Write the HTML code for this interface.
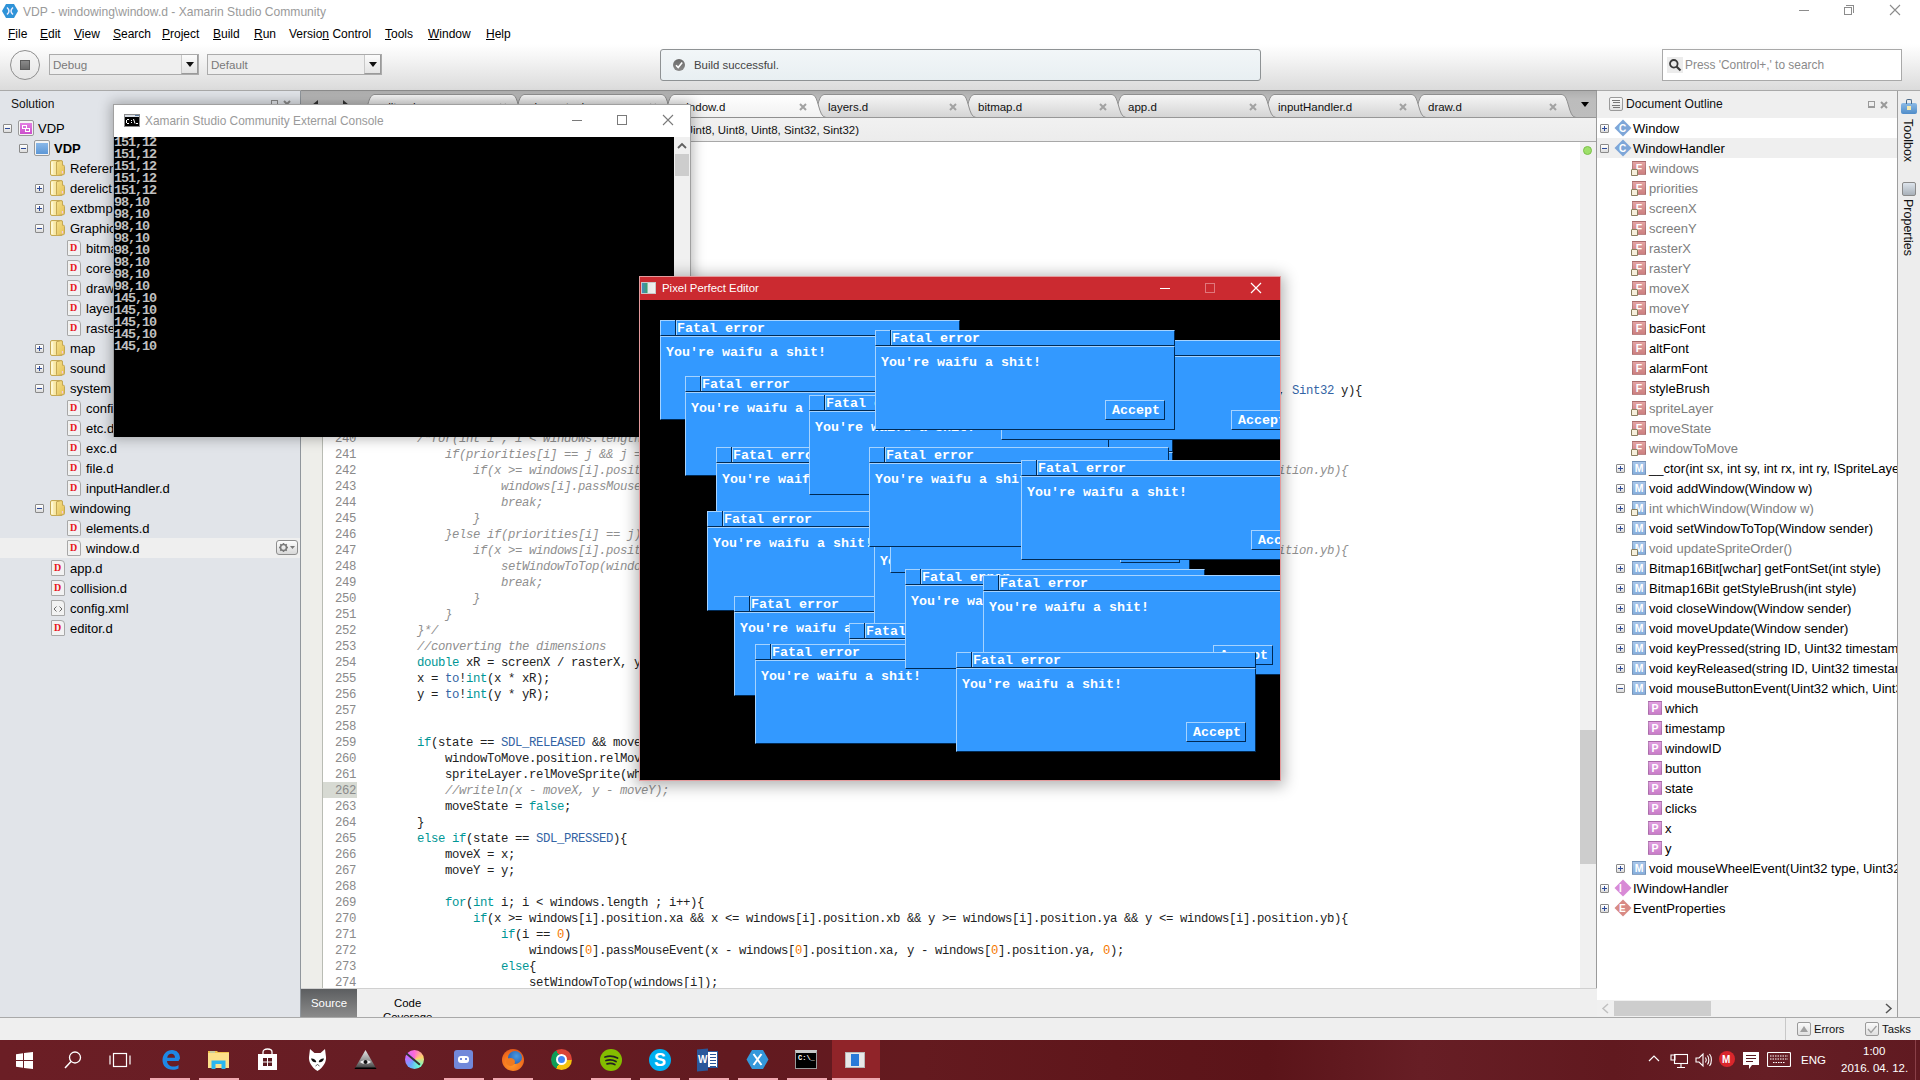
<!DOCTYPE html><html><head><meta charset="utf-8"><title>VDP - Xamarin Studio</title><style>
*{box-sizing:border-box;margin:0;padding:0}
html,body{width:1920px;height:1080px;overflow:hidden;background:#fff}
body{position:relative;font-family:'Liberation Sans',sans-serif;font-size:12px;color:#000}
.a{position:absolute}
.t{position:absolute;white-space:nowrap;line-height:1}
.mono{font-family:'Liberation Mono',monospace}
.row{position:absolute;height:20px;white-space:nowrap}
.exp{position:absolute;width:9px;height:9px;border:1px solid #8a8a8a;border-radius:1px;background:linear-gradient(#fff,#dcdcdc)}
.exp:before{content:'';position:absolute;left:1px;top:3px;width:5px;height:1px;background:#2c4a9a}
.exp.p:after{content:'';position:absolute;left:3px;top:1px;width:1px;height:5px;background:#2c4a9a}
.lbl{position:absolute;font-size:12.5px;line-height:20px;top:0;white-space:nowrap}
.dfile{position:absolute;width:14px;height:16px;background:#f2f2f2;border:1px solid #a8a8a8;border-radius:1px 4px 1px 1px}
.dfile:after{content:'D';position:absolute;left:2px;top:1px;font:bold 10px 'Liberation Serif',serif;color:#e8141b}
.folder{position:absolute;width:16px;height:16px}
.folder:before{content:'';position:absolute;left:1px;top:2px;width:12px;height:13px;background:linear-gradient(90deg,#e6c25a,#fbe79a 45%,#e0b94a);border-radius:1px}
.folder:after{content:'';position:absolute;left:9px;top:5px;width:6px;height:11px;background:linear-gradient(90deg,#f7de86,#e9c561);border-radius:1px;transform:skewY(-10deg)}
.oic{position:absolute;width:14px;height:14px;color:#fff;font:bold 10.5px 'Liberation Sans',sans-serif;text-align:center;line-height:13px;border:1px solid rgba(0,0,0,0.16)}
.lock{position:absolute;width:7px;height:7px;background:#f6f0dc;border:1px solid #8c8060;border-radius:1px 1px 0 0}
.diam{position:absolute;width:12px;height:12px;transform:rotate(45deg)}
.code{position:absolute;left:361px;white-space:pre;font-family:'Liberation Mono',monospace;font-size:12.3px;letter-spacing:-0.38px;line-height:16px;height:16px;padding-top:1px;color:#222}
.k{color:#009695}.ty{color:#3364a4}.n{color:#f57900}.cm{color:#8f8f8f;font-style:italic}
.ln{position:absolute;left:323px;width:33px;text-align:right;font-family:'Liberation Mono',monospace;font-size:12.3px;letter-spacing:-0.38px;line-height:16px;height:16px;padding-top:1px;color:#8a8a8a}
.fw{position:absolute;width:300px;height:100px}
.fw .tb{position:absolute;left:0;top:0;width:300px;height:16px;background:#3399ff;border-top:1px solid #a6d3ff;border-left:1px solid #a6d3ff;border-bottom:1px solid #002a55;border-right:1px solid #002a55}
.fw .cb{position:absolute;left:-1px;top:-1px;width:16px;height:16px;border-right:1px solid #002a55}
.fw .tl{position:absolute;left:15px;top:0;width:1px;height:14px;background:#a6d3ff}
.fw .bd{position:absolute;left:0;top:16px;width:300px;height:84px;background:#3399ff;border-top:1px solid #a6d3ff;border-left:1px solid #a6d3ff;border-bottom:1px solid #002a55;border-right:1px solid #002a55}
.fw .bt{position:absolute;left:230px;top:70px;width:60px;height:20px;border-top:1px solid #a6d3ff;border-left:1px solid #a6d3ff;border-bottom:1px solid #002a55;border-right:1px solid #002a55}
.px{position:absolute;white-space:pre;font-family:'Liberation Mono',monospace;font-weight:bold;font-size:13.333px;line-height:12px;color:#fff;letter-spacing:0}
.con{position:absolute;left:114px;white-space:pre;font-family:'Liberation Mono',monospace;font-weight:bold;font-size:13.5px;letter-spacing:-1.1px;line-height:12px;height:12px;color:#c0c0c0}
.tab{position:absolute}
.ul{text-decoration:underline;text-underline-offset:1px}
</style></head><body>
<svg width="0" height="0" style="position:absolute"><defs><linearGradient id="fy" x1="0" y1="0" x2="1" y2="0"><stop offset="0" stop-color="#fff6c4"/><stop offset="1" stop-color="#ecd074"/></linearGradient><linearGradient id="fz" x1="0" y1="0" x2="1" y2="1"><stop offset="0" stop-color="#f6e08c"/><stop offset="1" stop-color="#e2c055"/></linearGradient><symbol id="fold" viewBox="0 0 16 16"><rect x="0.5" y="0.5" width="12" height="15" rx="1.5" fill="url(#fy)" stroke="#c4a855"/><path d="M2 2.2V14" stroke="#fffdf0" stroke-width="1"/><path d="M6.5 1.8L11 0.6Q12.5 0.5 12.5 2V5.2H13.2Q14.5 5.2 14.5 6.5V13.5Q14.5 14.6 13.3 14.7L7.6 15.5Q6.5 15.6 6.5 14.5Z" fill="url(#fz)" stroke="#c4a855"/><path d="M12.5 11V13.5" stroke="#f4c8e8" stroke-width="1.2"/></symbol></defs></svg>
<div class="a" style="left:0;top:0;width:1920px;height:22px;background:#fff"></div>
<svg class="a" style="left:2px;top:4px" width="16" height="14" viewBox="0 0 16 14"><polygon points="4,0 12,0 16,7 12,14 4,14 0,7" fill="#2f93d8"/><path d="M5 3.5Q9 7 5 10.5M11 3.5Q7 7 11 10.5" stroke="#eef" stroke-width="1.5" fill="none"/></svg>
<div class="t" style="left:23px;top:6.00px;font-size:12.1px;color:#9a9a9a;">VDP - windowing\window.d - Xamarin Studio Community</div>
<div class="a" style="left:1799px;top:10px;width:10px;height:1px;background:#8c8c8c"></div>
<div class="a" style="left:1844px;top:7px;width:8px;height:8px;border:1px solid #8c8c8c;background:#fff"></div>
<div class="a" style="left:1846px;top:5px;width:8px;height:8px;border-top:1px solid #8c8c8c;border-right:1px solid #8c8c8c"></div>
<svg class="a" style="left:1889px;top:4px" width="12" height="12"><path d="M1 1L11 11M11 1L1 11" stroke="#8c8c8c" stroke-width="1.1"/></svg>
<div class="a" style="left:0;top:22px;width:1920px;height:22px;background:#fff"></div>
<div class="t" style="left:8px;top:28.00px;font-size:12px;color:#000;"><span class="ul">F</span>ile</div>
<div class="t" style="left:40px;top:28.00px;font-size:12px;color:#000;"><span class="ul">E</span>dit</div>
<div class="t" style="left:74px;top:28.00px;font-size:12px;color:#000;"><span class="ul">V</span>iew</div>
<div class="t" style="left:113px;top:28.00px;font-size:12px;color:#000;"><span class="ul">S</span>earch</div>
<div class="t" style="left:162px;top:28.00px;font-size:12px;color:#000;"><span class="ul">P</span>roject</div>
<div class="t" style="left:213px;top:28.00px;font-size:12px;color:#000;"><span class="ul">B</span>uild</div>
<div class="t" style="left:254px;top:28.00px;font-size:12px;color:#000;"><span class="ul">R</span>un</div>
<div class="t" style="left:289px;top:28.00px;font-size:12px;color:#000;">Versio<span class="ul">n</span> Control</div>
<div class="t" style="left:385px;top:28.00px;font-size:12px;color:#000;"><span class="ul">T</span>ools</div>
<div class="t" style="left:428px;top:28.00px;font-size:12px;color:#000;"><span class="ul">W</span>indow</div>
<div class="t" style="left:486px;top:28.00px;font-size:12px;color:#000;"><span class="ul">H</span>elp</div>
<div class="a" style="left:0;top:44px;width:1920px;height:46px;background:linear-gradient(#ffffff,#f5f5f5 30%,#dbdbdb)"></div>
<div class="a" style="left:0;top:90px;width:1920px;height:1px;background:#a9a9a9"></div>
<div class="a" style="left:10px;top:50px;width:30px;height:30px;border-radius:50%;border:1px solid #8e8e8e;background:linear-gradient(#f6f6f6,#e6e6e6)"></div>
<div class="a" style="left:20px;top:60px;width:10px;height:10px;background:linear-gradient(#8a8a8a,#6a6a6a);border:1px solid #5a5a5a"></div>
<div class="a" style="left:49px;top:54px;width:150px;height:21px;border:1px solid #ababab;background:#efefef"></div>
<div class="a" style="left:181px;top:55px;width:17px;height:19px;background:linear-gradient(#fbfbfb,#e4e4e4);border-left:1px solid #c8c8c8;border-right:1px solid #9a9a9a;border-bottom:1px solid #9a9a9a"></div>
<div class="a" style="left:186px;top:62px;width:0;height:0;border-left:4px solid transparent;border-right:4px solid transparent;border-top:5px solid #111"></div>
<div class="t" style="left:53px;top:59.00px;font-size:11.6px;color:#7a7a7a;">Debug</div>
<div class="a" style="left:207px;top:54px;width:175px;height:21px;border:1px solid #ababab;background:#efefef"></div>
<div class="a" style="left:364px;top:55px;width:17px;height:19px;background:linear-gradient(#fbfbfb,#e4e4e4);border-left:1px solid #c8c8c8;border-right:1px solid #9a9a9a;border-bottom:1px solid #9a9a9a"></div>
<div class="a" style="left:369px;top:62px;width:0;height:0;border-left:4px solid transparent;border-right:4px solid transparent;border-top:5px solid #111"></div>
<div class="t" style="left:211px;top:59.00px;font-size:11.6px;color:#7a7a7a;">Default</div>
<div class="a" style="left:660px;top:49px;width:601px;height:32px;border:1px solid #8e9294;border-radius:3px;background:linear-gradient(#f2f6f8,#e8eff2)"></div>
<div class="a" style="left:673px;top:59px;width:12px;height:12px;border-radius:50%;background:linear-gradient(#6a6a6a,#8a8a8a)"></div>
<svg class="a" style="left:673px;top:59px" width="12" height="12"><path d="M3 6.3L5.2 8.5L9.2 3.6" stroke="#fff" stroke-width="1.6" fill="none"/></svg>
<div class="t" style="left:694px;top:60.00px;font-size:11.4px;color:#444;">Build successful.</div>
<div class="a" style="left:1662px;top:49px;width:240px;height:32px;border:1px solid #a9a9a9;background:#fff"></div>
<div class="a" style="left:1667px;top:57px;width:16px;height:16px;background:#ececec"></div>
<svg class="a" style="left:1668px;top:58px" width="14" height="14"><circle cx="5.8" cy="5.8" r="3.8" stroke="#3a3a3a" stroke-width="1.8" fill="none"/><path d="M8.5 8.5L12.5 12.5" stroke="#3a3a3a" stroke-width="2.2"/></svg>
<div class="t" style="left:1685px;top:60.00px;font-size:11.9px;color:#8a8a8a;">Press 'Control+,' to search</div>
<div class="a" style="left:0;top:91px;width:300px;height:926px;background:#e1e4e9"></div>
<div class="a" style="left:300px;top:91px;width:1px;height:926px;background:#90969c"></div>
<div class="t" style="left:11px;top:98.00px;font-size:12px;color:#111;">Solution</div>
<div class="a" style="left:271px;top:100px;width:7px;height:7px;border:1px solid #8a8a8a;border-bottom-width:2px"></div>
<svg class="a" style="left:283px;top:100px" width="8" height="8"><path d="M1 1L7 7M7 1L1 7" stroke="#8a8a8a" stroke-width="2"/></svg>
<div class="exp" style="left:3px;top:124px"></div>
<div class="a" style="left:18px;top:120px;width:16px;height:16px;border:1px solid #9a9a9a;border-radius:2px;background:#f4f4f4"></div>
<div class="a" style="left:20px;top:123px;width:12px;height:11px;background:linear-gradient(#e27ee2,#cc4fcc)"></div>
<div class="a" style="left:22px;top:125px;width:5px;height:4px;border:1px solid #fff"></div>
<div class="a" style="left:25px;top:128px;width:5px;height:4px;border:1px solid #fff"></div>
<div class="t" style="left:38px;top:122.00px;font-size:13px;color:#000;">VDP</div>
<div class="exp" style="left:19px;top:144px"></div>
<div class="a" style="left:34px;top:140px;width:16px;height:16px;border:1px solid #9a9a9a;border-radius:2px;background:#f4f4f4"></div>
<div class="a" style="left:36px;top:143px;width:12px;height:11px;background:linear-gradient(#8ab8e8,#5d97d6)"></div>
<div class="t" style="left:54px;top:142.00px;font-size:13px;color:#000;font-weight:bold;">VDP</div>
<svg class="a" style="left:50px;top:160px" width="16" height="16"><use href="#fold"/></svg>
<div class="t" style="left:70px;top:162.00px;font-size:13px;color:#000;">References</div>
<div class="exp p" style="left:35px;top:184px"></div>
<svg class="a" style="left:50px;top:180px" width="16" height="16"><use href="#fold"/></svg>
<div class="t" style="left:70px;top:182.00px;font-size:13px;color:#000;">derelict</div>
<div class="exp p" style="left:35px;top:204px"></div>
<svg class="a" style="left:50px;top:200px" width="16" height="16"><use href="#fold"/></svg>
<div class="t" style="left:70px;top:202.00px;font-size:13px;color:#000;">extbmp</div>
<div class="exp" style="left:35px;top:224px"></div>
<svg class="a" style="left:50px;top:220px" width="16" height="16"><use href="#fold"/></svg>
<div class="t" style="left:70px;top:222.00px;font-size:13px;color:#000;">Graphics</div>
<div class="dfile" style="left:67px;top:240px"></div>
<div class="t" style="left:86px;top:242.00px;font-size:13px;color:#000;">bitmap.d</div>
<div class="dfile" style="left:67px;top:260px"></div>
<div class="t" style="left:86px;top:262.00px;font-size:13px;color:#000;">core.d</div>
<div class="dfile" style="left:67px;top:280px"></div>
<div class="t" style="left:86px;top:282.00px;font-size:13px;color:#000;">draw.d</div>
<div class="dfile" style="left:67px;top:300px"></div>
<div class="t" style="left:86px;top:302.00px;font-size:13px;color:#000;">layers.d</div>
<div class="dfile" style="left:67px;top:320px"></div>
<div class="t" style="left:86px;top:322.00px;font-size:13px;color:#000;">raster.d</div>
<div class="exp p" style="left:35px;top:344px"></div>
<svg class="a" style="left:50px;top:340px" width="16" height="16"><use href="#fold"/></svg>
<div class="t" style="left:70px;top:342.00px;font-size:13px;color:#000;">map</div>
<div class="exp p" style="left:35px;top:364px"></div>
<svg class="a" style="left:50px;top:360px" width="16" height="16"><use href="#fold"/></svg>
<div class="t" style="left:70px;top:362.00px;font-size:13px;color:#000;">sound</div>
<div class="exp" style="left:35px;top:384px"></div>
<svg class="a" style="left:50px;top:380px" width="16" height="16"><use href="#fold"/></svg>
<div class="t" style="left:70px;top:382.00px;font-size:13px;color:#000;">system</div>
<div class="dfile" style="left:67px;top:400px"></div>
<div class="t" style="left:86px;top:402.00px;font-size:13px;color:#000;">config.d</div>
<div class="dfile" style="left:67px;top:420px"></div>
<div class="t" style="left:86px;top:422.00px;font-size:13px;color:#000;">etc.d</div>
<div class="dfile" style="left:67px;top:440px"></div>
<div class="t" style="left:86px;top:442.00px;font-size:13px;color:#000;">exc.d</div>
<div class="dfile" style="left:67px;top:460px"></div>
<div class="t" style="left:86px;top:462.00px;font-size:13px;color:#000;">file.d</div>
<div class="dfile" style="left:67px;top:480px"></div>
<div class="t" style="left:86px;top:482.00px;font-size:13px;color:#000;">inputHandler.d</div>
<div class="exp" style="left:35px;top:504px"></div>
<svg class="a" style="left:50px;top:500px" width="16" height="16"><use href="#fold"/></svg>
<div class="t" style="left:70px;top:502.00px;font-size:13px;color:#000;">windowing</div>
<div class="dfile" style="left:67px;top:520px"></div>
<div class="t" style="left:86px;top:522.00px;font-size:13px;color:#000;">elements.d</div>
<div class="a" style="left:0;top:538px;width:300px;height:20px;background:#efefef"></div>
<div class="a" style="left:276px;top:540px;width:22px;height:15px;border:1px solid #8e8e8e;border-radius:3px;background:linear-gradient(#fdfdfd,#d8d8d8)"></div>
<svg class="a" style="left:278px;top:542px" width="18" height="11"><circle cx="5.5" cy="5.5" r="3" stroke="#7a7a7a" stroke-width="1.6" fill="none"/><path d="M5.5 1V2.5M5.5 8.5V10M1 5.5H2.5M8.5 5.5H10M2.3 2.3L3.3 3.3M7.7 7.7L8.7 8.7M2.3 8.7L3.3 7.7M7.7 3.3L8.7 2.3" stroke="#7a7a7a" stroke-width="1.4"/><path d="M12 4H17L14.5 7Z" fill="#7a7a7a"/></svg>
<div class="dfile" style="left:67px;top:540px"></div>
<div class="t" style="left:86px;top:542.00px;font-size:13px;color:#000;">window.d</div>
<div class="dfile" style="left:51px;top:560px"></div>
<div class="t" style="left:70px;top:562.00px;font-size:13px;color:#000;">app.d</div>
<div class="dfile" style="left:51px;top:580px"></div>
<div class="t" style="left:70px;top:582.00px;font-size:13px;color:#000;">collision.d</div>
<div class="dfile" style="left:51px;top:600px;color:transparent"></div>
<div class="a" style="left:51px;top:600px;width:14px;height:16px;background:#f2f2f2;border:1px solid #a8a8a8;border-radius:1px 4px 1px 1px"></div>
<svg class="a" style="left:51px;top:600px" width="14" height="16"><path d="M5.5 6.5L3 9L5.5 11.5M8.5 6.5L11 9L8.5 11.5" stroke="#6a6a6a" stroke-width="1" fill="none"/></svg>
<div class="t" style="left:70px;top:602.00px;font-size:13px;color:#000;">config.xml</div>
<div class="dfile" style="left:51px;top:620px"></div>
<div class="t" style="left:70px;top:622.00px;font-size:13px;color:#000;">editor.d</div>
<div class="a" style="left:301px;top:90px;width:1296px;height:1px;background:#8c8c8c"></div>
<div class="a" style="left:301px;top:91px;width:1296px;height:27px;background:linear-gradient(#aeaeae,#bcbcbc 30%,#bdbdbd)"></div>
<div class="a" style="left:301px;top:117px;width:1296px;height:1px;background:#979797"></div>
<div class="a" style="left:312px;top:100px;width:0;height:0;border-top:5px solid transparent;border-bottom:5px solid transparent;border-right:6px solid #333"></div>
<div class="a" style="left:343px;top:100px;width:0;height:0;border-top:5px solid transparent;border-bottom:5px solid transparent;border-left:6px solid #333"></div>
<svg class="a" style="left:0;top:0" width="1597" height="120"><defs><linearGradient id="tgi" x1="0" y1="0" x2="0" y2="1"><stop offset="0" stop-color="#f6f6f6"/><stop offset="1" stop-color="#d4d4d4"/></linearGradient><linearGradient id="tga" x1="0" y1="0" x2="0" y2="1"><stop offset="0" stop-color="#ffffff"/><stop offset="1" stop-color="#f1f1f1"/></linearGradient></defs><path d="M1410 117.5 C1418 117.5 1417 94.5 1424 94.5 L1562 94.5 C1569 94.5 1568 117.5 1576 117.5 Z" fill="url(#tgi)" stroke="#8f8f8f" stroke-width="1"/><path d="M1260 117.5 C1268 117.5 1267 94.5 1274 94.5 L1412 94.5 C1419 94.5 1418 117.5 1426 117.5 Z" fill="url(#tgi)" stroke="#8f8f8f" stroke-width="1"/><path d="M1110 117.5 C1118 117.5 1117 94.5 1124 94.5 L1262 94.5 C1269 94.5 1268 117.5 1276 117.5 Z" fill="url(#tgi)" stroke="#8f8f8f" stroke-width="1"/><path d="M960 117.5 C968 117.5 967 94.5 974 94.5 L1112 94.5 C1119 94.5 1118 117.5 1126 117.5 Z" fill="url(#tgi)" stroke="#8f8f8f" stroke-width="1"/><path d="M810 117.5 C818 117.5 817 94.5 824 94.5 L962 94.5 C969 94.5 968 117.5 976 117.5 Z" fill="url(#tgi)" stroke="#8f8f8f" stroke-width="1"/><path d="M510 117.5 C518 117.5 517 94.5 524 94.5 L662 94.5 C669 94.5 668 117.5 676 117.5 Z" fill="url(#tgi)" stroke="#8f8f8f" stroke-width="1"/><path d="M360 117.5 C368 117.5 367 94.5 374 94.5 L512 94.5 C519 94.5 518 117.5 526 117.5 Z" fill="url(#tgi)" stroke="#8f8f8f" stroke-width="1"/><path d="M660 117.5 C668 117.5 667 94.5 674 94.5 L812 94.5 C819 94.5 818 117.5 826 117.5 Z" fill="url(#tga)" stroke="#8f8f8f" stroke-width="1"/></svg>
<div class="a" style="left:301px;top:117px;width:373px;height:1px;background:#979797"></div>
<div class="a" style="left:820px;top:117px;width:777px;height:1px;background:#979797"></div>
<div class="t" style="left:378px;top:102.00px;font-size:11.5px;color:#111;">editor.d</div>
<svg class="a" style="left:499px;top:103px" width="8" height="8"><path d="M1 1L7 7M7 1L1 7" stroke="#a2a2a2" stroke-width="2"/></svg>
<div class="t" style="left:528px;top:102.00px;font-size:11.5px;color:#111;">elements.d</div>
<svg class="a" style="left:649px;top:103px" width="8" height="8"><path d="M1 1L7 7M7 1L1 7" stroke="#a2a2a2" stroke-width="2"/></svg>
<div class="t" style="left:678px;top:102.00px;font-size:11.5px;color:#111;">window.d</div>
<svg class="a" style="left:799px;top:103px" width="8" height="8"><path d="M1 1L7 7M7 1L1 7" stroke="#a2a2a2" stroke-width="2"/></svg>
<div class="t" style="left:828px;top:102.00px;font-size:11.5px;color:#111;">layers.d</div>
<svg class="a" style="left:949px;top:103px" width="8" height="8"><path d="M1 1L7 7M7 1L1 7" stroke="#a2a2a2" stroke-width="2"/></svg>
<div class="t" style="left:978px;top:102.00px;font-size:11.5px;color:#111;">bitmap.d</div>
<svg class="a" style="left:1099px;top:103px" width="8" height="8"><path d="M1 1L7 7M7 1L1 7" stroke="#a2a2a2" stroke-width="2"/></svg>
<div class="t" style="left:1128px;top:102.00px;font-size:11.5px;color:#111;">app.d</div>
<svg class="a" style="left:1249px;top:103px" width="8" height="8"><path d="M1 1L7 7M7 1L1 7" stroke="#a2a2a2" stroke-width="2"/></svg>
<div class="t" style="left:1278px;top:102.00px;font-size:11.5px;color:#111;">inputHandler.d</div>
<svg class="a" style="left:1399px;top:103px" width="8" height="8"><path d="M1 1L7 7M7 1L1 7" stroke="#a2a2a2" stroke-width="2"/></svg>
<div class="t" style="left:1428px;top:102.00px;font-size:11.5px;color:#111;">draw.d</div>
<svg class="a" style="left:1549px;top:103px" width="8" height="8"><path d="M1 1L7 7M7 1L1 7" stroke="#a2a2a2" stroke-width="2"/></svg>
<div class="a" style="left:1581px;top:102px;width:0;height:0;border-left:4px solid transparent;border-right:4px solid transparent;border-top:5px solid #000"></div>
<div class="a" style="left:301px;top:118px;width:1296px;height:23px;background:linear-gradient(#f1f1f1,#ececec)"></div>
<div class="a" style="left:301px;top:141px;width:1296px;height:1px;background:#a8a8a8"></div>
<div class="t" style="right:1061px;top:125.00px;font-size:11.45px;color:#111;">WindowHandler &gt; void mouseButtonEvent(Uint32, Uint32, Uint32, Uint8, Uint8, Uint8, Sint32, Sint32)</div>
<div class="a" style="left:301px;top:142px;width:1279px;height:846px;background:#fff"></div>
<div class="a" style="left:301px;top:142px;width:21px;height:846px;background:#eeeeea"></div>
<div class="a" style="left:322px;top:142px;width:1px;height:846px;background:#b9bcb4"></div>
<div class="a" style="left:1580px;top:142px;width:16px;height:846px;background:#f0f0f0"></div>
<div class="a" style="left:1580px;top:730px;width:16px;height:134px;background:#cdcdcd"></div>
<div class="a" style="left:1583px;top:146px;width:9px;height:9px;border-radius:50%;background:#9ee06a;border:1px solid #7cc04a"></div>
<div class="a" style="left:1596px;top:91px;width:1px;height:926px;background:#9a9a9a"></div>
<div class="a" style="left:0;top:142px;width:1580px;height:846px;overflow:hidden">
<div class="ln" style="top:0px">222</div>
<div class="ln" style="top:16px">223</div>
<div class="ln" style="top:32px">224</div>
<div class="ln" style="top:48px">225</div>
<div class="ln" style="top:64px">226</div>
<div class="ln" style="top:80px">227</div>
<div class="ln" style="top:96px">228</div>
<div class="ln" style="top:112px">229</div>
<div class="ln" style="top:128px">230</div>
<div class="ln" style="top:144px">231</div>
<div class="ln" style="top:160px">232</div>
<div class="ln" style="top:176px">233</div>
<div class="ln" style="top:192px">234</div>
<div class="ln" style="top:208px">235</div>
<div class="ln" style="top:224px">236</div>
<div class="ln" style="top:240px">237</div>
<div class="code" style="top:240px">    public <span class="k">void</span> mouseButtonEvent(<span class="ty">Uint32</span> which, <span class="ty">Uint32</span> timestamp, <span class="ty">Uint32</span> windowID, <span class="ty">Uint8</span> button, <span class="ty">Uint8</span> state, <span class="ty">Uint8</span> clicks, <span class="ty">Sint32</span> x, <span class="ty">Sint32</span> y){</div>
<div class="ln" style="top:256px">238</div>
<div class="ln" style="top:272px">239</div>
<div class="ln" style="top:288px">240</div>
<div class="code" style="top:288px">        <span class="cm">/*for(int i ; i &lt; windows.length ; i++){</span></div>
<div class="ln" style="top:304px">241</div>
<div class="code" style="top:304px">            <span class="cm">if(priorities[i] == j &amp;&amp; j == 0){</span></div>
<div class="ln" style="top:320px">242</div>
<div class="code" style="top:320px">                <span class="cm">if(x &gt;= windows[i].position.xa &amp;&amp; x &lt;= windows[i].position.xb &amp;&amp; y &gt;= windows[i].position.ya &amp;&amp; y &lt;= windows[i].position.yb){</span></div>
<div class="ln" style="top:336px">243</div>
<div class="code" style="top:336px">                    <span class="cm">windows[i].passMouseEvent(x - windows[i].position.xa, y - windows[i].position.ya, 0);</span></div>
<div class="ln" style="top:352px">244</div>
<div class="code" style="top:352px">                    <span class="cm">break;</span></div>
<div class="ln" style="top:368px">245</div>
<div class="code" style="top:368px">                <span class="cm">}</span></div>
<div class="ln" style="top:384px">246</div>
<div class="code" style="top:384px">            <span class="cm">}else if(priorities[i] == j){</span></div>
<div class="ln" style="top:400px">247</div>
<div class="code" style="top:400px">                <span class="cm">if(x &gt;= windows[i].position.xa &amp;&amp; x &lt;= windows[i].position.xb &amp;&amp; y &gt;= windows[i].position.ya &amp;&amp; y &lt;= windows[i].position.yb){</span></div>
<div class="ln" style="top:416px">248</div>
<div class="code" style="top:416px">                    <span class="cm">setWindowToTop(windows[i]);</span></div>
<div class="ln" style="top:432px">249</div>
<div class="code" style="top:432px">                    <span class="cm">break;</span></div>
<div class="ln" style="top:448px">250</div>
<div class="code" style="top:448px">                <span class="cm">}</span></div>
<div class="ln" style="top:464px">251</div>
<div class="code" style="top:464px">            <span class="cm">}</span></div>
<div class="ln" style="top:480px">252</div>
<div class="code" style="top:480px">        <span class="cm">}*/</span></div>
<div class="ln" style="top:496px">253</div>
<div class="code" style="top:496px">        <span class="cm">//converting the dimensions</span></div>
<div class="ln" style="top:512px">254</div>
<div class="code" style="top:512px">        <span class="k">double</span> xR = screenX / rasterX, yR = screenY / rasterY;</div>
<div class="ln" style="top:528px">255</div>
<div class="code" style="top:528px">        x = <span class="ty">to</span>!<span class="k">int</span>(x * xR);</div>
<div class="ln" style="top:544px">256</div>
<div class="code" style="top:544px">        y = <span class="ty">to</span>!<span class="k">int</span>(y * yR);</div>
<div class="ln" style="top:560px">257</div>
<div class="ln" style="top:576px">258</div>
<div class="ln" style="top:592px">259</div>
<div class="code" style="top:592px">        <span class="k">if</span>(state == <span class="ty">SDL_RELEASED</span> &amp;&amp; moveState){</div>
<div class="ln" style="top:608px">260</div>
<div class="code" style="top:608px">            windowToMove.position.relMove(x - moveX, y - moveY);</div>
<div class="ln" style="top:624px">261</div>
<div class="code" style="top:624px">            spriteLayer.relMoveSprite(whichWindow(windowToMove), x - moveX, y - moveY);</div>
<div class="a" style="left:323px;top:640px;width:34px;height:16px;background:#d7dad3"></div>
<div class="ln" style="top:640px">262</div>
<div class="code" style="top:640px">            <span class="cm">//writeln(x - moveX, y - moveY);</span></div>
<div class="ln" style="top:656px">263</div>
<div class="code" style="top:656px">            moveState = <span class="k">false</span>;</div>
<div class="ln" style="top:672px">264</div>
<div class="code" style="top:672px">        }</div>
<div class="ln" style="top:688px">265</div>
<div class="code" style="top:688px">        <span class="k">else</span> <span class="k">if</span>(state == <span class="ty">SDL_PRESSED</span>){</div>
<div class="ln" style="top:704px">266</div>
<div class="code" style="top:704px">            moveX = x;</div>
<div class="ln" style="top:720px">267</div>
<div class="code" style="top:720px">            moveY = y;</div>
<div class="ln" style="top:736px">268</div>
<div class="ln" style="top:752px">269</div>
<div class="code" style="top:752px">            <span class="k">for</span>(<span class="k">int</span> i; i &lt; windows.length ; i++){</div>
<div class="ln" style="top:768px">270</div>
<div class="code" style="top:768px">                <span class="k">if</span>(x &gt;= windows[i].position.xa &amp;&amp; x &lt;= windows[i].position.xb &amp;&amp; y &gt;= windows[i].position.ya &amp;&amp; y &lt;= windows[i].position.yb){</div>
<div class="ln" style="top:784px">271</div>
<div class="code" style="top:784px">                    <span class="k">if</span>(i == <span class="n">0</span>)</div>
<div class="ln" style="top:800px">272</div>
<div class="code" style="top:800px">                        windows[<span class="n">0</span>].passMouseEvent(x - windows[<span class="n">0</span>].position.xa, y - windows[<span class="n">0</span>].position.ya, <span class="n">0</span>);</div>
<div class="ln" style="top:816px">273</div>
<div class="code" style="top:816px">                    <span class="k">else</span>{</div>
<div class="ln" style="top:832px">274</div>
<div class="code" style="top:832px">                        setWindowToTop(windows[i]);</div>
<div class="ln" style="top:848px">275</div>
</div>
<div class="a" style="left:301px;top:988px;width:1296px;height:1px;background:#d0d0d0"></div>
<div class="a" style="left:301px;top:989px;width:1296px;height:28px;background:#efefef"></div>
<div class="a" style="left:301px;top:989px;width:56px;height:28px;background:linear-gradient(#5c5e60,#8b8b8b)"></div>
<div class="t" style="left:311px;top:998.00px;font-size:11.4px;color:#fff;">Source</div>
<div class="a" style="left:0;top:989px;width:1920px;height:28px;overflow:hidden"><div class="t" style="left:394px;top:9.00px;font-size:11.4px;color:#000;">Code</div><div class="t" style="left:383px;top:23.00px;font-size:11.4px;color:#000;">Coverage</div></div>
<div class="a" style="left:0;top:1017px;width:1920px;height:1px;background:#a9a9a9"></div>
<div class="a" style="left:0;top:1018px;width:1920px;height:22px;background:#efefef"></div>
<div class="a" style="left:1597px;top:91px;width:300px;height:27px;background:#efefef"></div>
<div class="a" style="left:1609px;top:97px;width:14px;height:14px;border:1px solid #9a9a9a;border-radius:2px;background:linear-gradient(#fafafa,#e2e2e2)"></div>
<div class="a" style="left:1612px;top:100px;width:8px;height:1px;background:#777"></div>
<div class="a" style="left:1613px;top:102px;width:7px;height:1px;background:#777"></div>
<div class="a" style="left:1612px;top:105px;width:8px;height:1px;background:#777"></div>
<div class="a" style="left:1613px;top:107px;width:7px;height:1px;background:#777"></div>
<div class="t" style="left:1626px;top:98.00px;font-size:12.1px;color:#111;">Document Outline</div>
<div class="a" style="left:1868px;top:101px;width:7px;height:7px;border:1px solid #9a9a9a;border-bottom-width:2px"></div>
<svg class="a" style="left:1880px;top:101px" width="8" height="8"><path d="M1 1L7 7M7 1L1 7" stroke="#9a9a9a" stroke-width="2"/></svg>
<div class="a" style="left:1597px;top:118px;width:300px;height:882px;background:#fff;overflow:hidden">
<div class="exp p" style="left:3px;top:6px"></div>
<div class="diam" style="left:20px;top:4px;background:#7ea6d8"></div>
<div class="t" style="left:22px;top:5px;font:bold 10px 'Liberation Sans',sans-serif;color:#fff">C</div>
<div class="t" style="left:36px;top:4.00px;font-size:13px;color:#000;">Window</div>
<div class="a" style="left:0;top:20px;width:300px;height:20px;background:#efefef"></div>
<div class="exp" style="left:3px;top:26px"></div>
<div class="diam" style="left:20px;top:24px;background:#7ea6d8"></div>
<div class="t" style="left:22px;top:25px;font:bold 10px 'Liberation Sans',sans-serif;color:#fff">C</div>
<div class="t" style="left:36px;top:24.00px;font-size:13px;color:#000;">WindowHandler</div>
<div class="oic" style="left:35px;top:43px;background:linear-gradient(#e3a3a3,#cc8080)">F</div>
<div class="lock" style="left:34px;top:51px"></div>
<div class="t" style="left:52px;top:44.00px;font-size:13px;color:#7d7d7d;">windows</div>
<div class="oic" style="left:35px;top:63px;background:linear-gradient(#e3a3a3,#cc8080)">F</div>
<div class="lock" style="left:34px;top:71px"></div>
<div class="t" style="left:52px;top:64.00px;font-size:13px;color:#7d7d7d;">priorities</div>
<div class="oic" style="left:35px;top:83px;background:linear-gradient(#e3a3a3,#cc8080)">F</div>
<div class="lock" style="left:34px;top:91px"></div>
<div class="t" style="left:52px;top:84.00px;font-size:13px;color:#7d7d7d;">screenX</div>
<div class="oic" style="left:35px;top:103px;background:linear-gradient(#e3a3a3,#cc8080)">F</div>
<div class="lock" style="left:34px;top:111px"></div>
<div class="t" style="left:52px;top:104.00px;font-size:13px;color:#7d7d7d;">screenY</div>
<div class="oic" style="left:35px;top:123px;background:linear-gradient(#e3a3a3,#cc8080)">F</div>
<div class="lock" style="left:34px;top:131px"></div>
<div class="t" style="left:52px;top:124.00px;font-size:13px;color:#7d7d7d;">rasterX</div>
<div class="oic" style="left:35px;top:143px;background:linear-gradient(#e3a3a3,#cc8080)">F</div>
<div class="lock" style="left:34px;top:151px"></div>
<div class="t" style="left:52px;top:144.00px;font-size:13px;color:#7d7d7d;">rasterY</div>
<div class="oic" style="left:35px;top:163px;background:linear-gradient(#e3a3a3,#cc8080)">F</div>
<div class="lock" style="left:34px;top:171px"></div>
<div class="t" style="left:52px;top:164.00px;font-size:13px;color:#7d7d7d;">moveX</div>
<div class="oic" style="left:35px;top:183px;background:linear-gradient(#e3a3a3,#cc8080)">F</div>
<div class="lock" style="left:34px;top:191px"></div>
<div class="t" style="left:52px;top:184.00px;font-size:13px;color:#7d7d7d;">moveY</div>
<div class="oic" style="left:35px;top:203px;background:linear-gradient(#e3a3a3,#cc8080)">F</div>
<div class="t" style="left:52px;top:204.00px;font-size:13px;color:#000;">basicFont</div>
<div class="oic" style="left:35px;top:223px;background:linear-gradient(#e3a3a3,#cc8080)">F</div>
<div class="t" style="left:52px;top:224.00px;font-size:13px;color:#000;">altFont</div>
<div class="oic" style="left:35px;top:243px;background:linear-gradient(#e3a3a3,#cc8080)">F</div>
<div class="t" style="left:52px;top:244.00px;font-size:13px;color:#000;">alarmFont</div>
<div class="oic" style="left:35px;top:263px;background:linear-gradient(#e3a3a3,#cc8080)">F</div>
<div class="t" style="left:52px;top:264.00px;font-size:13px;color:#000;">styleBrush</div>
<div class="oic" style="left:35px;top:283px;background:linear-gradient(#e3a3a3,#cc8080)">F</div>
<div class="lock" style="left:34px;top:291px"></div>
<div class="t" style="left:52px;top:284.00px;font-size:13px;color:#7d7d7d;">spriteLayer</div>
<div class="oic" style="left:35px;top:303px;background:linear-gradient(#e3a3a3,#cc8080)">F</div>
<div class="lock" style="left:34px;top:311px"></div>
<div class="t" style="left:52px;top:304.00px;font-size:13px;color:#7d7d7d;">moveState</div>
<div class="oic" style="left:35px;top:323px;background:linear-gradient(#e3a3a3,#cc8080)">F</div>
<div class="lock" style="left:34px;top:331px"></div>
<div class="t" style="left:52px;top:324.00px;font-size:13px;color:#7d7d7d;">windowToMove</div>
<div class="exp p" style="left:19px;top:346px"></div>
<div class="oic" style="left:35px;top:343px;background:linear-gradient(#a8c6ea,#86aedc)">M</div>
<div class="t" style="left:52px;top:344.00px;font-size:13px;color:#000;">__ctor(int sx, int sy, int rx, int ry, ISpriteLayer sl)</div>
<div class="exp p" style="left:19px;top:366px"></div>
<div class="oic" style="left:35px;top:363px;background:linear-gradient(#a8c6ea,#86aedc)">M</div>
<div class="t" style="left:52px;top:364.00px;font-size:13px;color:#000;">void addWindow(Window w)</div>
<div class="exp p" style="left:19px;top:386px"></div>
<div class="oic" style="left:35px;top:383px;background:linear-gradient(#a8c6ea,#86aedc)">M</div>
<div class="lock" style="left:34px;top:391px"></div>
<div class="t" style="left:52px;top:384.00px;font-size:13px;color:#7d7d7d;">int whichWindow(Window w)</div>
<div class="exp p" style="left:19px;top:406px"></div>
<div class="oic" style="left:35px;top:403px;background:linear-gradient(#a8c6ea,#86aedc)">M</div>
<div class="t" style="left:52px;top:404.00px;font-size:13px;color:#000;">void setWindowToTop(Window sender)</div>
<div class="oic" style="left:35px;top:423px;background:linear-gradient(#a8c6ea,#86aedc)">M</div>
<div class="lock" style="left:34px;top:431px"></div>
<div class="t" style="left:52px;top:424.00px;font-size:13px;color:#7d7d7d;">void updateSpriteOrder()</div>
<div class="exp p" style="left:19px;top:446px"></div>
<div class="oic" style="left:35px;top:443px;background:linear-gradient(#a8c6ea,#86aedc)">M</div>
<div class="t" style="left:52px;top:444.00px;font-size:13px;color:#000;">Bitmap16Bit[wchar] getFontSet(int style)</div>
<div class="exp p" style="left:19px;top:466px"></div>
<div class="oic" style="left:35px;top:463px;background:linear-gradient(#a8c6ea,#86aedc)">M</div>
<div class="t" style="left:52px;top:464.00px;font-size:13px;color:#000;">Bitmap16Bit getStyleBrush(int style)</div>
<div class="exp p" style="left:19px;top:486px"></div>
<div class="oic" style="left:35px;top:483px;background:linear-gradient(#a8c6ea,#86aedc)">M</div>
<div class="t" style="left:52px;top:484.00px;font-size:13px;color:#000;">void closeWindow(Window sender)</div>
<div class="exp p" style="left:19px;top:506px"></div>
<div class="oic" style="left:35px;top:503px;background:linear-gradient(#a8c6ea,#86aedc)">M</div>
<div class="t" style="left:52px;top:504.00px;font-size:13px;color:#000;">void moveUpdate(Window sender)</div>
<div class="exp p" style="left:19px;top:526px"></div>
<div class="oic" style="left:35px;top:523px;background:linear-gradient(#a8c6ea,#86aedc)">M</div>
<div class="t" style="left:52px;top:524.00px;font-size:13px;color:#000;">void keyPressed(string ID, Uint32 timestamp, Uint32 windowID)</div>
<div class="exp p" style="left:19px;top:546px"></div>
<div class="oic" style="left:35px;top:543px;background:linear-gradient(#a8c6ea,#86aedc)">M</div>
<div class="t" style="left:52px;top:544.00px;font-size:13px;color:#000;">void keyReleased(string ID, Uint32 timestamp, Uint32 windowID)</div>
<div class="exp" style="left:19px;top:566px"></div>
<div class="oic" style="left:35px;top:563px;background:linear-gradient(#a8c6ea,#86aedc)">M</div>
<div class="t" style="left:52px;top:564.00px;font-size:13px;color:#000;">void mouseButtonEvent(Uint32 which, Uint32 timestamp)</div>
<div class="oic" style="left:51px;top:583px;background:linear-gradient(#e0a0e0,#c87cc8)">P</div>
<div class="t" style="left:68px;top:584.00px;font-size:13px;color:#000;">which</div>
<div class="oic" style="left:51px;top:603px;background:linear-gradient(#e0a0e0,#c87cc8)">P</div>
<div class="t" style="left:68px;top:604.00px;font-size:13px;color:#000;">timestamp</div>
<div class="oic" style="left:51px;top:623px;background:linear-gradient(#e0a0e0,#c87cc8)">P</div>
<div class="t" style="left:68px;top:624.00px;font-size:13px;color:#000;">windowID</div>
<div class="oic" style="left:51px;top:643px;background:linear-gradient(#e0a0e0,#c87cc8)">P</div>
<div class="t" style="left:68px;top:644.00px;font-size:13px;color:#000;">button</div>
<div class="oic" style="left:51px;top:663px;background:linear-gradient(#e0a0e0,#c87cc8)">P</div>
<div class="t" style="left:68px;top:664.00px;font-size:13px;color:#000;">state</div>
<div class="oic" style="left:51px;top:683px;background:linear-gradient(#e0a0e0,#c87cc8)">P</div>
<div class="t" style="left:68px;top:684.00px;font-size:13px;color:#000;">clicks</div>
<div class="oic" style="left:51px;top:703px;background:linear-gradient(#e0a0e0,#c87cc8)">P</div>
<div class="t" style="left:68px;top:704.00px;font-size:13px;color:#000;">x</div>
<div class="oic" style="left:51px;top:723px;background:linear-gradient(#e0a0e0,#c87cc8)">P</div>
<div class="t" style="left:68px;top:724.00px;font-size:13px;color:#000;">y</div>
<div class="exp p" style="left:19px;top:746px"></div>
<div class="oic" style="left:35px;top:743px;background:linear-gradient(#a8c6ea,#86aedc)">M</div>
<div class="t" style="left:52px;top:744.00px;font-size:13px;color:#000;">void mouseWheelEvent(Uint32 type, Uint32 timestamp)</div>
<div class="exp p" style="left:3px;top:766px"></div>
<div class="diam" style="left:20px;top:764px;background:#d88ad6"></div>
<div class="t" style="left:22px;top:765px;font:bold 10px 'Liberation Sans',sans-serif;color:#fff">I</div>
<div class="t" style="left:36px;top:764.00px;font-size:13px;color:#000;">IWindowHandler</div>
<div class="exp p" style="left:3px;top:786px"></div>
<div class="diam" style="left:20px;top:784px;background:#d88a84"></div>
<div class="t" style="left:22px;top:785px;font:bold 10px 'Liberation Sans',sans-serif;color:#fff">E</div>
<div class="t" style="left:36px;top:784.00px;font-size:13px;color:#000;">EventProperties</div>
</div>
<div class="a" style="left:1597px;top:1000px;width:300px;height:17px;background:#f0f0f0"></div>
<div class="a" style="left:1614px;top:1001px;width:97px;height:15px;background:#cdcdcd"></div>
<svg class="a" style="left:1601px;top:1003px" width="10" height="11"><path d="M7 1L2 5.5L7 10" stroke="#c0c0c0" stroke-width="1.5" fill="none"/></svg>
<svg class="a" style="left:1883px;top:1003px" width="10" height="11"><path d="M3 1L8 5.5L3 10" stroke="#555" stroke-width="1.5" fill="none"/></svg>
<div class="a" style="left:1897px;top:91px;width:1px;height:926px;background:#9e9e9e"></div>
<div class="a" style="left:1898px;top:91px;width:22px;height:926px;background:#ededed"></div>
<div class="a" style="left:1901px;top:103px;width:16px;height:11px;background:linear-gradient(#8dbbe6,#4f8cc9);border-radius:2px"></div>
<div class="a" style="left:1906px;top:99px;width:6px;height:5px;border:1px solid #4a6a8a;border-bottom:none;border-radius:2px 2px 0 0"></div>
<div class="a" style="left:1907px;top:106px;width:4px;height:4px;background:#f5e9b0"></div>
<div class="t" style="left:1914px;top:119px;font-size:12.5px;color:#111;transform:rotate(90deg);transform-origin:0 0">Toolbox</div>
<div class="a" style="left:1902px;top:182px;width:14px;height:14px;background:linear-gradient(#dde4ec,#a8b0b8);border:1px solid #8a8a8a;border-radius:2px"></div>
<div class="t" style="left:1914px;top:199px;font-size:12.5px;color:#111;transform:rotate(90deg);transform-origin:0 0">Properties</div>
<div class="a" style="left:1785px;top:1018px;width:1px;height:22px;background:#c8c8c8"></div>
<div class="a" style="left:1797px;top:1022px;width:14px;height:14px;border:1px solid #9a9a9a;border-radius:2px;background:linear-gradient(#fafafa,#e0e0e0)"></div>
<div class="a" style="left:1800px;top:1026px;width:0;height:0;border-left:4px solid transparent;border-right:4px solid transparent;border-bottom:6px solid #a0a0a0"></div>
<div class="t" style="left:1814px;top:1024.00px;font-size:11.2px;color:#111;">Errors</div>
<div class="a" style="left:1865px;top:1022px;width:14px;height:14px;border:1px solid #9a9a9a;border-radius:2px;background:linear-gradient(#fafafa,#e0e0e0)"></div>
<svg class="a" style="left:1866px;top:1023px" width="12" height="12"><path d="M2 6L5 9.5L10.5 3" stroke="#a0a0a0" stroke-width="1.3" fill="none"/></svg>
<div class="t" style="left:1882px;top:1024.00px;font-size:11.3px;color:#111;">Tasks</div>
<div class="a" style="left:113px;top:104px;width:578px;height:333px;box-shadow:0 0 12px 2px rgba(0,0,0,0.28)"></div>
<div class="a" style="left:113px;top:104px;width:578px;height:333px;background:#fff;border:1px solid #a0a0a0;border-bottom:none"></div>
<div class="a" style="left:114px;top:137px;width:560px;height:300px;background:#000;overflow:hidden">
<div class="con" style="left:0;top:0px">151,12</div>
<div class="con" style="left:0;top:12px">151,12</div>
<div class="con" style="left:0;top:24px">151,12</div>
<div class="con" style="left:0;top:36px">151,12</div>
<div class="con" style="left:0;top:48px">151,12</div>
<div class="con" style="left:0;top:60px">98,10</div>
<div class="con" style="left:0;top:72px">98,10</div>
<div class="con" style="left:0;top:84px">98,10</div>
<div class="con" style="left:0;top:96px">98,10</div>
<div class="con" style="left:0;top:108px">98,10</div>
<div class="con" style="left:0;top:120px">98,10</div>
<div class="con" style="left:0;top:132px">98,10</div>
<div class="con" style="left:0;top:144px">98,10</div>
<div class="con" style="left:0;top:156px">145,10</div>
<div class="con" style="left:0;top:168px">145,10</div>
<div class="con" style="left:0;top:180px">145,10</div>
<div class="con" style="left:0;top:192px">145,10</div>
<div class="con" style="left:0;top:204px">145,10</div>
</div>
<div class="a" style="left:674px;top:137px;width:16px;height:300px;background:#f0f0f0"></div>
<svg class="a" style="left:677px;top:142px" width="10" height="7"><path d="M1 6L5 2L9 6" stroke="#606060" stroke-width="1.8" fill="none"/></svg>
<div class="a" style="left:675px;top:154px;width:14px;height:22px;background:#cdcdcd"></div>
<svg class="a" style="left:124px;top:114px" width="16" height="13"><rect x="0.5" y="0.5" width="15" height="12" fill="#000" stroke="#8c8c8c"/><rect x="1" y="1" width="14" height="2" fill="#d8dee6"/><rect x="11" y="1" width="4" height="1" fill="#5a7aa0"/><path d="M3 5.5H5M2.5 6V9M3 9.5H5M7 6.5H8M7 8.5H8M9.5 5L11 9.5M12 9.5H14" stroke="#fff" stroke-width="1"/></svg>
<div class="t" style="left:145px;top:116.00px;font-size:11.9px;color:#9a9a9a;">Xamarin Studio Community External Console</div>
<div class="a" style="left:572px;top:120px;width:10px;height:1px;background:#7a7a7a"></div>
<div class="a" style="left:617px;top:115px;width:10px;height:10px;border:1px solid #7a7a7a"></div>
<svg class="a" style="left:662px;top:114px" width="12" height="12"><path d="M1 1L11 11M11 1L1 11" stroke="#7a7a7a" stroke-width="1.1"/></svg>
<div class="a" style="left:639px;top:276px;width:642px;height:505px;box-shadow:0 2px 14px 3px rgba(0,0,0,0.30)"></div>
<div class="a" style="left:639px;top:276px;width:642px;height:505px;background:#cb2a30;border:1px solid #e49a9c"></div>
<div class="a" style="left:641px;top:282px;width:15px;height:12px;background:linear-gradient(90deg,#4a8ac0,#3aa070 40%,#e8e8e8 45%,#f0f0f0);border:1px solid #c8c8c8"></div>
<div class="t" style="left:662px;top:283.00px;font-size:11.4px;color:#fff;">Pixel Perfect Editor</div>
<div class="a" style="left:1160px;top:288px;width:10px;height:1px;background:#ffffff"></div>
<div class="a" style="left:1205px;top:283px;width:10px;height:10px;border:1px solid #e0777c"></div>
<svg class="a" style="left:1250px;top:282px" width="12" height="12"><path d="M1 1L11 11M11 1L1 11" stroke="#fff" stroke-width="1.2"/></svg>
<div class="a" style="left:640px;top:300px;width:640px;height:480px;background:#000;overflow:hidden">
<div class="fw" style="left:20px;top:20px"><div class="tb"><div class="cb"></div><div class="tl"></div></div><div class="px" style="left:17px;top:3px">Fatal error</div><div class="bd"></div><div class="px" style="left:6px;top:27px">You're waifu a shit!</div><div class="bt"></div><div class="px" style="left:237px;top:75px">Accept</div></div>
<div class="fw" style="left:233px;top:136px"><div class="tb"><div class="cb"></div><div class="tl"></div></div><div class="px" style="left:17px;top:3px">Fatal error</div><div class="bd"></div><div class="px" style="left:6px;top:27px">You're waifu a shit!</div><div class="bt"></div><div class="px" style="left:237px;top:75px">Accept</div></div>
<div class="fw" style="left:45px;top:76px"><div class="tb"><div class="cb"></div><div class="tl"></div></div><div class="px" style="left:17px;top:3px">Fatal error</div><div class="bd"></div><div class="px" style="left:6px;top:27px">You're waifu a shit!</div><div class="bt"></div><div class="px" style="left:237px;top:75px">Accept</div></div>
<div class="fw" style="left:76px;top:147px"><div class="tb"><div class="cb"></div><div class="tl"></div></div><div class="px" style="left:17px;top:3px">Fatal error</div><div class="bd"></div><div class="px" style="left:6px;top:27px">You're waifu a shit!</div><div class="bt"></div><div class="px" style="left:237px;top:75px">Accept</div></div>
<div class="fw" style="left:169px;top:95px"><div class="tb"><div class="cb"></div><div class="tl"></div></div><div class="px" style="left:17px;top:3px">Fatal error</div><div class="bd"></div><div class="px" style="left:6px;top:27px">You're waifu a shit!</div><div class="bt"></div><div class="px" style="left:237px;top:75px">Accept</div></div>
<div class="fw" style="left:361px;top:40px"><div class="tb"><div class="cb"></div><div class="tl"></div></div><div class="px" style="left:17px;top:3px">Fatal error</div><div class="bd"></div><div class="px" style="left:6px;top:27px">You're waifu a shit!</div><div class="bt"></div><div class="px" style="left:237px;top:75px">Accept</div></div>
<div class="fw" style="left:235px;top:30px"><div class="tb"><div class="cb"></div><div class="tl"></div></div><div class="px" style="left:17px;top:3px">Fatal error</div><div class="bd"></div><div class="px" style="left:6px;top:27px">You're waifu a shit!</div><div class="bt"></div><div class="px" style="left:237px;top:75px">Accept</div></div>
<div class="fw" style="left:67px;top:211px"><div class="tb"><div class="cb"></div><div class="tl"></div></div><div class="px" style="left:17px;top:3px">Fatal error</div><div class="bd"></div><div class="px" style="left:6px;top:27px">You're waifu a shit!</div><div class="bt"></div><div class="px" style="left:237px;top:75px">Accept</div></div>
<div class="fw" style="left:94px;top:296px"><div class="tb"><div class="cb"></div><div class="tl"></div></div><div class="px" style="left:17px;top:3px">Fatal error</div><div class="bd"></div><div class="px" style="left:6px;top:27px">You're waifu a shit!</div><div class="bt"></div><div class="px" style="left:237px;top:75px">Accept</div></div>
<div class="fw" style="left:234px;top:229px"><div class="tb"><div class="cb"></div><div class="tl"></div></div><div class="px" style="left:17px;top:3px">Fatal error</div><div class="bd"></div><div class="px" style="left:6px;top:27px">You're waifu a shit!</div><div class="bt"></div><div class="px" style="left:237px;top:75px">Accept</div></div>
<div class="fw" style="left:250px;top:173px"><div class="tb"><div class="cb"></div><div class="tl"></div></div><div class="px" style="left:17px;top:3px">Fatal error</div><div class="bd"></div><div class="px" style="left:6px;top:27px">You're waifu a shit!</div><div class="bt"></div><div class="px" style="left:237px;top:75px">Accept</div></div>
<div class="fw" style="left:229px;top:147px"><div class="tb"><div class="cb"></div><div class="tl"></div></div><div class="px" style="left:17px;top:3px">Fatal error</div><div class="bd"></div><div class="px" style="left:6px;top:27px">You're waifu a shit!</div><div class="bt"></div><div class="px" style="left:237px;top:75px">Accept</div></div>
<div class="fw" style="left:381px;top:160px"><div class="tb"><div class="cb"></div><div class="tl"></div></div><div class="px" style="left:17px;top:3px">Fatal error</div><div class="bd"></div><div class="px" style="left:6px;top:27px">You're waifu a shit!</div><div class="bt"></div><div class="px" style="left:237px;top:75px">Accept</div></div>
<div class="fw" style="left:209px;top:323px"><div class="tb"><div class="cb"></div><div class="tl"></div></div><div class="px" style="left:17px;top:3px">Fatal error</div><div class="bd"></div><div class="px" style="left:6px;top:27px">You're waifu a shit!</div><div class="bt"></div><div class="px" style="left:237px;top:75px">Accept</div></div>
<div class="fw" style="left:115px;top:344px"><div class="tb"><div class="cb"></div><div class="tl"></div></div><div class="px" style="left:17px;top:3px">Fatal error</div><div class="bd"></div><div class="px" style="left:6px;top:27px">You're waifu a shit!</div><div class="bt"></div><div class="px" style="left:237px;top:75px">Accept</div></div>
<div class="fw" style="left:265px;top:269px"><div class="tb"><div class="cb"></div><div class="tl"></div></div><div class="px" style="left:17px;top:3px">Fatal error</div><div class="bd"></div><div class="px" style="left:6px;top:27px">You're waifu a shit!</div><div class="bt"></div><div class="px" style="left:237px;top:75px">Accept</div></div>
<div class="fw" style="left:343px;top:275px"><div class="tb"><div class="cb"></div><div class="tl"></div></div><div class="px" style="left:17px;top:3px">Fatal error</div><div class="bd"></div><div class="px" style="left:6px;top:27px">You're waifu a shit!</div><div class="bt"></div><div class="px" style="left:237px;top:75px">Accept</div></div>
<div class="fw" style="left:316px;top:352px"><div class="tb"><div class="cb"></div><div class="tl"></div></div><div class="px" style="left:17px;top:3px">Fatal error</div><div class="bd"></div><div class="px" style="left:6px;top:27px">You're waifu a shit!</div><div class="bt"></div><div class="px" style="left:237px;top:75px">Accept</div></div>
</div>
<div class="a" style="left:0;top:1040px;width:1920px;height:40px;background:linear-gradient(90deg,#6b1e25 0%,#671d24 20%,#621a20 38%,#641a1f 48%,#5f161b 58%,#5b1419 66%,#671e25 74%,#61191f 84%,#661e25 92%,#601a21 100%)"></div>
<div class="a" style="left:832px;top:1040px;width:48px;height:40px;background:#902429"></div>
<div class="a" style="left:150px;top:1078px;width:40px;height:2px;background:#f0a8b0"></div>
<div class="a" style="left:199px;top:1078px;width:40px;height:2px;background:#f0a8b0"></div>
<div class="a" style="left:444px;top:1078px;width:40px;height:2px;background:#f0a8b0"></div>
<div class="a" style="left:493px;top:1078px;width:40px;height:2px;background:#f0a8b0"></div>
<div class="a" style="left:591px;top:1078px;width:40px;height:2px;background:#f0a8b0"></div>
<div class="a" style="left:640px;top:1078px;width:40px;height:2px;background:#f0a8b0"></div>
<div class="a" style="left:689px;top:1078px;width:40px;height:2px;background:#f0a8b0"></div>
<div class="a" style="left:738px;top:1078px;width:40px;height:2px;background:#f0a8b0"></div>
<div class="a" style="left:787px;top:1078px;width:40px;height:2px;background:#f0a8b0"></div>
<div class="a" style="left:832px;top:1078px;width:48px;height:2px;background:#f0a8b0"></div>
<svg class="a" style="left:16px;top:1052px" width="17" height="17"><path d="M0 2.3L7 1.3V8H0Z M8 1.1L17 0V8H8Z M0 9H7V15.7L0 14.7Z M8 9H17V17L8 15.9Z" fill="#fff"/></svg>
<svg class="a" style="left:63px;top:1050px" width="20" height="20"><circle cx="12" cy="7.5" r="5.5" stroke="#fff" stroke-width="1.3" fill="none"/><path d="M8 11.5L2 18" stroke="#fff" stroke-width="1.5"/></svg>
<svg class="a" style="left:109px;top:1052px" width="22" height="16"><rect x="4.5" y="1.5" width="13" height="13" stroke="#fff" stroke-width="1.2" fill="none"/><path d="M1 3.5V12.5M21 3.5V12.5" stroke="#fff" stroke-width="1.2"/></svg>
<svg class="a" style="left:160px;top:1049px" width="21" height="21"><path d="M18.5 12H7C7.2 15.5 10 17.5 13.5 17.5C15.5 17.5 17 17 18.5 16V19.5C17 20.3 15 20.8 12.8 20.8C6.5 20.8 2.5 16.8 2.5 11C2.5 5 7 1 12 1C17 1 20 4.5 20 9.5ZM7.2 8.8H15C15 6.3 13.5 4.8 11.3 4.8C9.3 4.8 7.6 6.3 7.2 8.8Z" fill="#1e88e5"/></svg>
<svg class="a" style="left:208px;top:1050px" width="21" height="19"><path d="M0 1H9L10 2H21V18H0Z" fill="#f2c24e"/><path d="M0 3H21V18H0Z" fill="#fde08a"/><rect x="2" y="1.5" width="5" height="1" fill="#9fd8f0"/><path d="M3.5 19V10.5H17.5V19H13.5V14H7.5V19Z" fill="#29b6f0"/></svg>
<svg class="a" style="left:257px;top:1048px" width="21" height="23"><path d="M6 6V4C6 2 8 1 10.5 1C13 1 15 2 15 4V6" stroke="#fff" stroke-width="1.3" fill="none"/><path d="M1 6H20V22H1Z" fill="#fff"/><path d="M6 10H10V13.5H6ZM11 10H15V13.5H11ZM6 14.5H10V18H6ZM11 14.5H15V18H11Z" fill="#5a1a21"/></svg>
<svg class="a" style="left:307px;top:1048px" width="21" height="23"><path d="M3 1L7.5 5H13.5L18 1L19 9C19.5 13 17 19 10.5 23C4 19 1.5 13 2 9Z" fill="#fff"/><path d="M4 10.5C6 10 9 11.5 9.3 14C7 14.8 4.5 13 4 10.5ZM17 10.5C15 10 12 11.5 11.7 14C14 14.8 16.5 13 17 10.5Z" fill="#111"/><path d="M8.5 18L10.5 16.5L12.5 18" stroke="#333" stroke-width="0.8" fill="none"/></svg>
<svg class="a" style="left:354px;top:1049px" width="23" height="21"><defs><linearGradient id="tri" x1="0" y1="0" x2="0" y2="1"><stop offset="0" stop-color="#e8e8e8"/><stop offset="0.6" stop-color="#8a8a8a"/><stop offset="1" stop-color="#333"/></linearGradient></defs><path d="M11.5 1L22.5 20H0.5Z" fill="url(#tri)"/><path d="M0.5 20H22.5L21.5 18.5H1.5Z" fill="#000"/><path d="M6 13C8.5 10.5 14.5 10.5 17 13C14.5 15.5 8.5 15.5 6 13Z" fill="#f4f4f4"/><circle cx="11.5" cy="13" r="2" fill="#111"/></svg>
<div class="a" style="left:405px;top:1050px;width:19px;height:19px;border-radius:50%;background:conic-gradient(#ff6ad5,#ffd36a,#6affd2,#6aa8ff,#c86aff,#ff6ad5)"></div>
<div class="a" style="left:404px;top:1058px;width:18px;height:2px;background:#333;transform:rotate(40deg)"></div>
<div class="a" style="left:454px;top:1050px;width:19px;height:19px;background:#7289da;border-radius:3px"></div>
<div class="a" style="left:458px;top:1056px;width:11px;height:7px;background:#fff;border-radius:3px"></div>
<div class="a" style="left:460px;top:1058px;width:2px;height:2px;background:#7289da"></div>
<div class="a" style="left:465px;top:1058px;width:2px;height:2px;background:#7289da"></div>
<div class="a" style="left:502px;top:1049px;width:22px;height:22px;border-radius:50%;background:radial-gradient(circle at 45% 70%,#ff9a2a,#f06a1c 60%,#c8401a)"></div>
<div class="a" style="left:508px;top:1051px;width:14px;height:13px;border-radius:50%;background:radial-gradient(circle at 60% 40%,#4a9ae0,#1f4fa8)"></div>
<div class="a" style="left:506px;top:1058px;width:9px;height:8px;border-radius:50%;background:#f07a20"></div>
<div class="a" style="left:551px;top:1049px;width:21px;height:21px;border-radius:50%;background:conic-gradient(from -30deg,#db4437 0 120deg,#f4c20d 120deg 240deg,#0f9d58 240deg 360deg)"></div>
<div class="a" style="left:556px;top:1054px;width:11px;height:11px;border-radius:50%;background:#4285f4;border:2px solid #fff"></div>
<div class="a" style="left:600px;top:1049px;width:22px;height:22px;border-radius:50%;background:#84bd00"></div>
<svg class="a" style="left:600px;top:1049px" width="22" height="22"><path d="M5 8C9 6.8 13.5 7 17.5 9M6 11.5C9.5 10.5 13 10.8 16 12.5M7 14.8C10 14 12.5 14.3 14.8 15.5" stroke="#222" stroke-width="1.8" fill="none" stroke-linecap="round"/></svg>
<div class="a" style="left:649px;top:1049px;width:22px;height:22px;border-radius:50%;background:#00aff0"></div>
<div class="t" style="left:654px;top:1050px;font:bold 18px 'Liberation Sans',sans-serif;color:#fff">S</div>
<div class="a" style="left:703px;top:1051px;width:15px;height:17px;background:#fff;border:1px solid #2b579a"></div>
<div class="a" style="left:697px;top:1049px;width:11px;height:22px;background:#2b579a;transform:skewY(-6deg)"></div>
<div class="t" style="left:698px;top:1054px;font:bold 10px 'Liberation Sans',sans-serif;color:#fff">W</div>
<div class="a" style="left:710px;top:1054px;width:6px;height:1px;background:#2b579a"></div>
<div class="a" style="left:710px;top:1057px;width:6px;height:1px;background:#2b579a"></div>
<div class="a" style="left:710px;top:1060px;width:6px;height:1px;background:#2b579a"></div>
<div class="a" style="left:710px;top:1063px;width:6px;height:1px;background:#2b579a"></div>
<div class="a" style="left:710px;top:1066px;width:6px;height:1px;background:#2b579a"></div>
<svg class="a" style="left:746px;top:1049px" width="23" height="21"><polygon points="6,1 17,1 22.5,10.5 17,20 6,20 0.5,10.5" fill="#3498db"/><path d="M7.5 5L11.5 10.5L7.5 16M15.5 5L11.5 10.5L15.5 16" stroke="#fff" stroke-width="2" fill="none"/></svg>
<div class="a" style="left:795px;top:1050px;width:22px;height:19px;background:#000;border:1px solid #9a9a9a;border-top:3px solid #c8c8c8"></div>
<div class="t" style="left:798px;top:1054px;font:bold 7px 'Liberation Mono',monospace;color:#fff">C:\_</div>
<div class="a" style="left:845px;top:1052px;width:20px;height:16px;background:#e8e8e8;border:1px solid #b8b8b8"></div>
<div class="a" style="left:851px;top:1054px;width:8px;height:12px;background:#2a7ad8"></div>
<svg class="a" style="left:1648px;top:1054px" width="12" height="8"><path d="M1 7L6 2L11 7" stroke="#fff" stroke-width="1.2" fill="none"/></svg>
<svg class="a" style="left:1670px;top:1051px" width="18" height="18"><rect x="4.5" y="3.5" width="13" height="9" stroke="#fff" stroke-width="1.1" fill="none"/><path d="M11 12.5V16M7 16.5H15M1 4H5V9H1Z" stroke="#fff" stroke-width="1.1" fill="none"/></svg>
<svg class="a" style="left:1694px;top:1051px" width="18" height="18"><path d="M2 7H5L9 3V15L5 11H2Z" stroke="#fff" stroke-width="1.1" fill="none"/><path d="M11.5 6.5C12.5 8 12.5 10 11.5 11.5M13.5 4.5C15.3 7 15.3 11 13.5 13.5M15.5 3C18 6 18 12 15.5 15" stroke="#fff" stroke-width="1.1" fill="none"/></svg>
<div class="a" style="left:1719px;top:1051px;width:16px;height:16px;border-radius:50%;background:#d9262c"></div>
<div class="t" style="left:1722px;top:1054px;font:bold 10px 'Liberation Sans',sans-serif;color:#fff">M</div>
<svg class="a" style="left:1742px;top:1051px" width="18" height="20"><path d="M1 1H17V14H10L7 18V14H1Z" fill="#fff"/><path d="M4 4.5H14M4 7.5H14M4 10.5H11" stroke="#5a1a21" stroke-width="1.1"/></svg>
<svg class="a" style="left:1767px;top:1052px" width="24" height="15"><rect x="0.5" y="0.5" width="23" height="14" rx="1" stroke="#fff" stroke-width="1.1" fill="none"/><path d="M3 4H21M3 7H21M6 10.5H18" stroke="#fff" stroke-width="1" stroke-dasharray="1.5 1"/></svg>
<div class="t" style="left:1801px;top:1055.00px;font-size:11.5px;color:#fff;">ENG</div>
<div class="t" style="left:1863px;top:1046.00px;font-size:11.5px;color:#fff;">1:00</div>
<div class="t" style="left:1841px;top:1063.00px;font-size:11.5px;color:#fff;">2016. 04. 12.</div>
<div class="a" style="left:1915px;top:1040px;width:1px;height:40px;background:#8a4048"></div>
</body></html>
